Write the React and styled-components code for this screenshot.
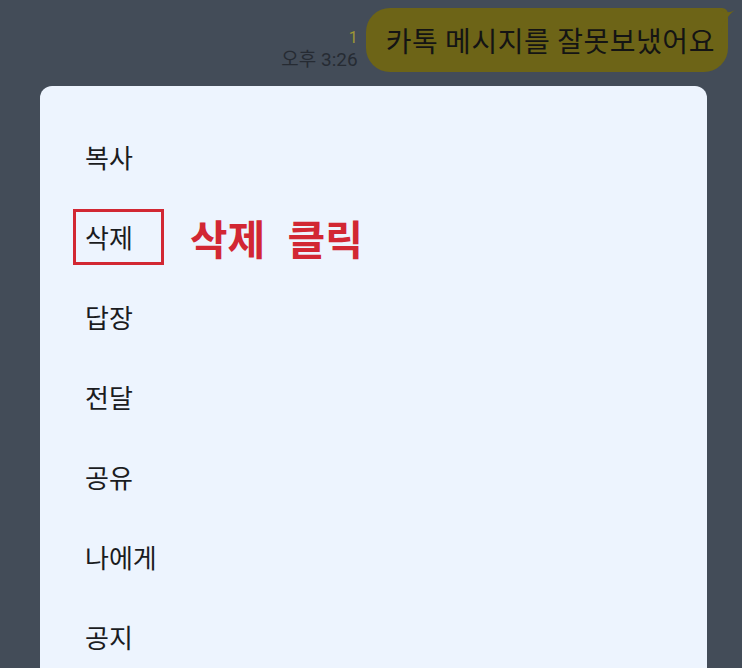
import styled, { createGlobalStyle } from "styled-components";

const GlobalStyle = createGlobalStyle`
    html, body {
        margin: 0;
        padding: 0;
        height: 100%;
        overflow: hidden;
        background-color: #434c58;
        font-family: "Noto Sans CJK KR", "Noto Sans", sans-serif;
    }
`

const menuItems = ["복사", "삭제", "답장", "전달", "공유", "나에게", "공지"];

const App = () => {
    return (
        <Screen>
            <GlobalStyle />
            <MessageRow>
                <Meta>
                    <ReadCount>1</ReadCount>
                    <Time>오후 3:26</Time>
                </Meta>
                <Bubble>
                    카톡 메시지를 잘못보냈어요
                    <Tail width="14" height="22" viewBox="0 0 14 22">
                        <path d="M0 0 L0 22 C2 14 6 6 14 0 C9 3 4 3 0 0 Z" fill="#6d6417" />
                    </Tail>
                </Bubble>
            </MessageRow>
            <Sheet>
                {menuItems.map((item) => (
                    <MenuItem key={item}>
                        <Label $marked={item === "삭제"}>{item}</Label>
                        {item === "삭제" && <Note>삭제 클릭</Note>}
                    </MenuItem>
                ))}
            </Sheet>
        </Screen>
    )
}

const Screen = styled.div`
    height: 100vh;
    display: flex;
    flex-direction: column;
`

const MessageRow = styled.div`
    display: flex;
    justify-content: flex-end;
    align-items: flex-end;
    gap: 8px;
    padding: 8px 14px 0 0;
`

const Meta = styled.div`
    display: flex;
    flex-direction: column;
    align-items: flex-end;
`

const ReadCount = styled.span`
    font-family: "Roboto", sans-serif;
    font-size: 16px;
    line-height: 20px;
    color: #9f9734;
`

const Time = styled.span`
    font-family: "Roboto", "Noto Sans CJK KR", sans-serif;
    font-size: 19px;
    line-height: 24px;
    color: #262b33;
`

const Bubble = styled.div`
    position: relative;
    height: 64px;
    display: flex;
    align-items: center;
    padding: 0 13px 0 20px;
    border-radius: 24px 6px 24px 24px;
    background-color: #6d6417;
    color: #141414;
    font-size: 28px;
    letter-spacing: 0.55px;
`

const Tail = styled.svg`
    position: absolute;
    top: 2px;
    right: -7px;
`

const Sheet = styled.div`
    flex: 1;
    margin: 14px 35px 0 40px;
    padding: 31px 0 0 45px;
    border-radius: 12px 12px 0 0;
    background-color: #edf4fe;
`

const MenuItem = styled.div`
    height: 80px;
    display: flex;
    align-items: center;
`

const Label = styled.span`
    position: relative;
    font-size: 26px;
    line-height: 34px;
    color: #1b1c1f;

    ${(props) => props.$marked && `
        &::before {
            content: "";
            position: absolute;
            top: -11px;
            bottom: -11px;
            left: -12px;
            right: -31px;
            border: 3px solid #d22733;
        }
    `}
`

const Note = styled.span`
    margin-left: 57px;
    font-size: 41px;
    font-weight: 700;
    word-spacing: 13px;
    color: #d22733;
`

export default App;
